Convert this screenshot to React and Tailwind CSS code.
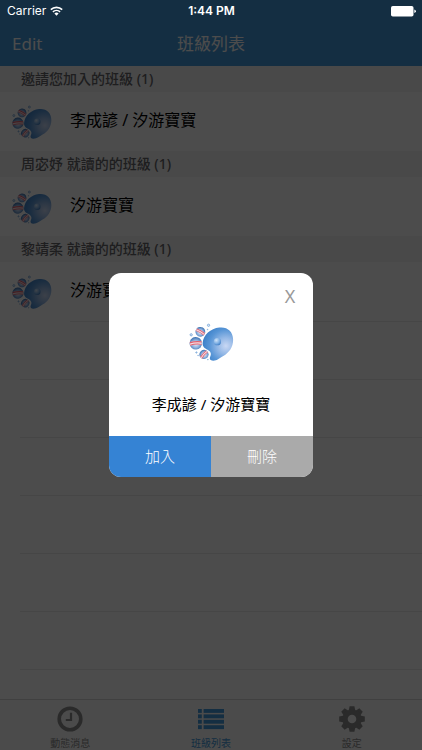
import { useId } from 'react';

const sections = [
  { title: '邀請您加入的班級 (1)', rows: ['李成諺 / 汐游寶寶'] },
  { title: '周宓妤 就讀的的班級 (1)', rows: ['汐游寶寶'] },
  { title: '黎靖柔 就讀的的班級 (1)', rows: ['汐游寶寶'] },
];

const emptyRows = [1, 2, 3, 4, 5, 6];

const bubbles = [
  { cx: 60, cy: 53, r: 15, angle: 30 },
  { cx: 46, cy: 88, r: 19, angle: -4 },
  { cx: 71, cy: 122, r: 14, angle: -48 },
];

function Logo({ className }) {
  const id = useId();

  return (
    <svg viewBox="26 26 136 116" className={className} aria-hidden="true">
      <defs>
        <radialGradient
          id={`${id}-body`}
          gradientUnits="userSpaceOnUse"
          cx="138"
          cy="96"
          r="72"
        >
          <stop offset="0" stopColor="#c9d8f4" />
          <stop offset="0.35" stopColor="#94b8e6" />
          <stop offset="0.7" stopColor="#5795d6" />
          <stop offset="1" stopColor="#3c80c8" />
        </radialGradient>
        <radialGradient id={`${id}-dot`} cx="0.35" cy="0.3" r="0.75">
          <stop offset="0" stopColor="#cfe3f8" />
          <stop offset="0.6" stopColor="#7fb0e4" />
          <stop offset="1" stopColor="#3f7fc6" />
        </radialGradient>
        <radialGradient id={`${id}-ball`} cx="0.5" cy="0.55" r="0.55">
          <stop offset="0" stopColor="#e8eefa" />
          <stop offset="0.55" stopColor="#8fb2de" />
          <stop offset="1" stopColor="#3a70b0" />
        </radialGradient>
      </defs>
      <path
        d="M118 40C142 37 160 52 160 77C160 100 148 116 130 127C119 133 112 141 99 141C90 141 87 135 90 129C95 120 91 113 82 108C73 103 66 98 67 87C69 63 91 43 118 40Z"
        fill={`url(#${id}-body)`}
      />
      <circle cx="112" cy="83" r="11" fill={`url(#${id}-dot)`} />
      {bubbles.map(({ cx, cy, r, angle }) => (
        <g key={cy} transform={`translate(${cx} ${cy}) rotate(${angle}) scale(${r / 19})`}>
          <circle r="19" fill={`url(#${id}-ball)`} />
          <path d="M-18 -5Q0 -9 18 -5L18 6Q0 2 -18 6Z" fill="#f6dfe4" />
          <path d="M-18 -5Q0 -9 18 -5L18 -1Q0 -5 -18 -1Z" fill="#dd6070" />
          <path d="M-18 3Q0 -1 18 3L18 6Q0 2 -18 6Z" fill="#dd6070" />
        </g>
      ))}
      <g fill="#dbe8f7" stroke="#5b93cf" strokeWidth="2">
        <circle cx="85" cy="33" r="3.5" />
        <circle cx="32" cy="62" r="3.5" />
        <circle cx="48" cy="116" r="2" />
        <circle cx="53" cy="125" r="1" />
        <circle cx="82" cy="46" r="1" />
        <circle cx="83" cy="138" r="1" />
      </g>
    </svg>
  );
}

function ClockIcon() {
  return (
    <svg viewBox="0 0 26 26" className="size-[26px]" fill="none" stroke="currentColor" aria-hidden="true">
      <circle cx="13" cy="13" r="10.8" strokeWidth="3.6" />
      <path d="M14 6.8V14H8.8" strokeWidth="2.2" />
    </svg>
  );
}

function ListIcon() {
  return (
    <svg viewBox="0 0 26 26" className="size-[26px]" fill="currentColor" aria-hidden="true">
      {[3, 8.4, 13.8, 19.2].map((y) => (
        <g key={y}>
          <rect x="0" y={y} width="3.8" height="3.9" />
          <rect x="5.6" y={y} width="20.4" height="3.9" />
        </g>
      ))}
    </svg>
  );
}

function GearIcon() {
  return (
    <svg viewBox="-13 -13 26 26" className="size-[26px]" aria-hidden="true">
      <g fill="currentColor">
        {[0, 45, 90, 135].map((angle) => (
          <path
            key={angle}
            transform={`rotate(${angle})`}
            d="M-2.4 -12.8H2.4L3.4 -8V8L2.4 12.8H-2.4L-3.4 8V-8Z"
          />
        ))}
        <circle r="9.6" />
      </g>
      <circle r="4.3" fill="#fafafa" />
    </svg>
  );
}

const tabs = [
  { label: '動態消息', icon: ClockIcon, active: false },
  { label: '班級列表', icon: ListIcon, active: true },
  { label: '設定', icon: GearIcon, active: false },
];

function StatusBar() {
  return (
    <div className="absolute inset-x-0 top-0 z-20 grid h-[22px] grid-cols-3 items-center pl-[7px] pr-[6px] font-['Inter','Liberation_Sans',sans-serif] text-xs text-white">
      <div className="flex items-center gap-1">
        <span>Carrier</span>
        <svg viewBox="0 0 13 10" className="h-[10px] w-[13px]" fill="none" stroke="currentColor" aria-hidden="true">
          <path d="M0.8 3.7A8.2 8.2 0 0 1 12.2 3.7" strokeWidth="1.6" />
          <path d="M2.9 5.9A5.2 5.2 0 0 1 10.1 5.9" strokeWidth="1.6" />
          <path d="M6.5 9.7L4.4 7.5A3 3 0 0 1 8.6 7.5Z" fill="currentColor" stroke="none" />
        </svg>
      </div>
      <span className="text-center font-semibold">1:44 PM</span>
      <svg viewBox="0 0 25 11" className="h-[11px] w-[25px] justify-self-end" fill="currentColor" aria-hidden="true">
        <rect width="22.5" height="10.5" rx="1.8" />
        <path d="M23.3 3.5Q25 4 25 5.3T23.3 7Z" />
      </svg>
    </div>
  );
}

function JoinDialog() {
  return (
    <div
      role="dialog"
      aria-modal="true"
      aria-labelledby="invite-name"
      className="flex w-[204px] flex-col overflow-hidden rounded-xl bg-white"
    >
      <button
        type="button"
        className="mt-2 mr-2 flex size-[30px] items-center justify-center self-end text-lg text-[#999999]"
      >
        X
      </button>
      <Logo className="mt-3 h-[38px] w-[45px] self-center" />
      <h2 id="invite-name" className="mt-[31px] mb-5 text-center text-[15px] leading-6 text-black">
        李成諺 / 汐游寶寶
      </h2>
      <div className="grid grid-cols-2 text-[15px] font-light text-white">
        <button type="button" className="h-[41px] bg-[#3583d4]">
          加入
        </button>
        <button type="button" className="h-[41px] bg-[#aaaaaa]">
          刪除
        </button>
      </div>
    </div>
  );
}

export default function App() {
  return (
    <div className="relative flex min-h-screen flex-col bg-white font-['Noto_Sans','Noto_Sans_CJK_TC',sans-serif]">
      <StatusBar />

      <header className="grid grid-cols-3 items-center bg-[#459bdc] px-3 pt-[22px] text-[17px] text-white">
        <button type="button" className="h-11 justify-self-start">
          Edit
        </button>
        <h1 className="text-center">班級列表</h1>
      </header>

      <main className="flex-1">
        {sections.map(({ title, rows }) => (
          <section key={title}>
            <h2 className="flex h-[26px] items-center bg-[#f5f5f5] px-[21px] text-sm font-medium text-[#66666a]">
              {title}
            </h2>
            <ul>
              {rows.map((name) => (
                <li key={name} className="flex h-[59px] items-center gap-[18px] px-3">
                  <Logo className="h-[34px] w-10" />
                  <span className="pb-1 text-base text-black">{name}</span>
                </li>
              ))}
            </ul>
          </section>
        ))}
        <div className="ml-[70px] border-t border-[#ebebeb]" />
        {emptyRows.map((row) => (
          <div key={row} className="ml-5 h-[58px] border-b border-[#ebebeb]" />
        ))}
      </main>

      <nav className="grid h-[51px] grid-cols-3 border-t border-[#d8d8d8] bg-[#fafafa]">
        {tabs.map(({ label, icon: Icon, active }) => (
          <button
            key={label}
            type="button"
            className={`flex flex-col items-center gap-[5px] pt-[6px] text-[10px] leading-3 ${
              active ? 'text-[#459bdc]' : 'text-[#8c8c8c]'
            }`}
          >
            <Icon />
            {label}
          </button>
        ))}
      </nav>

      <div className="absolute inset-0 z-10 flex items-center justify-center bg-black/70">
        <JoinDialog />
      </div>
    </div>
  );
}
